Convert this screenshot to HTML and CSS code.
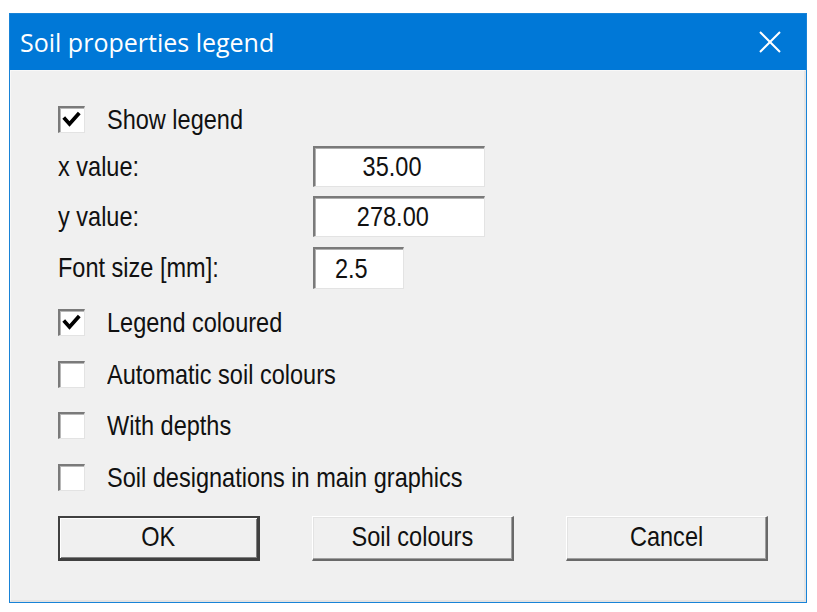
FILE: index.html
```html
<!DOCTYPE html>
<html>
<head>
<meta charset="utf-8">
<link rel="stylesheet" href="styles.css">
</head>
<body>
<div class="window">
  <div class="titlebar">
    <span class="title">Soil properties legend</span>
    <svg class="close" width="22" height="22" viewBox="0 0 22 22"><path d="M1 1 L21 21 M21 1 L1 21" stroke="#fff" stroke-width="2" fill="none"/></svg>
  </div>
  <div class="client">
    <div class="row check-row first">
      <span class="cb"><svg viewBox="0 0 22 22" width="22" height="22"><path d="M4 10 L8.5 15 L17 5.5" stroke="#000" stroke-width="3.8" fill="none" stroke-linejoin="miter" stroke-linecap="square"/></svg></span>
      <span class="t">Show legend</span>
    </div>
    <div class="row field-row r-x">
      <span class="label"><span class="t">x value:</span></span>
      <span class="input wide center"><span class="t c">35.00</span></span>
    </div>
    <div class="row field-row r-y">
      <span class="label"><span class="t">y value:</span></span>
      <span class="input wide center"><span class="t c">278.00</span></span>
    </div>
    <div class="row field-row r-f">
      <span class="label"><span class="t">Font size [mm]:</span></span>
      <span class="input narrow"><span class="t">2.5</span></span>
    </div>
    <div class="row check-row c1">
      <span class="cb"><svg viewBox="0 0 22 22" width="22" height="22"><path d="M4 10 L8.5 15 L17 5.5" stroke="#000" stroke-width="3.8" fill="none" stroke-linejoin="miter" stroke-linecap="square"/></svg></span>
      <span class="t">Legend coloured</span>
    </div>
    <div class="row check-row c2">
      <span class="cb"></span>
      <span class="t">Automatic soil colours</span>
    </div>
    <div class="row check-row c3">
      <span class="cb"></span>
      <span class="t">With depths</span>
    </div>
    <div class="row check-row c4">
      <span class="cb"></span>
      <span class="t">Soil designations in main graphics</span>
    </div>
    <div class="buttons">
      <span class="btn default"><span class="t c">OK</span></span>
      <span class="btn"><span class="t c">Soil colours</span></span>
      <span class="btn"><span class="t c">Cancel</span></span>
    </div>
  </div>
</div>
</body>
</html>
```

FILE: styles.css
```css
html, body {
  margin: 0;
  padding: 0;
  background: #ffffff;
}
body {
  padding: 13px 0 0 9px;
}
.window {
  width: 798px;
  height: 590px;
  box-sizing: border-box;
  border: 1px solid #1883d7;
  background: #0078d7;
  display: flex;
  flex-direction: column;
}
.titlebar {
  height: 56px;
  display: flex;
  align-items: center;
  justify-content: space-between;
  padding: 0 25px 0 10px;
  color: #fff;
}
.title {
  font-family: "Open Sans", "Noto Sans", sans-serif;
  font-size: 25px;
}
.close {
  display: block;
}
.client {
  flex: 1;
  background: #f0f0f0;
  border-top: 1px solid #f8f8f8;
  border-left: 1px solid #f8f8f8;
  border-right: 2px solid #e3e3e3;
  border-bottom: 2px solid #e3e3e3;
  padding: 35px 0 0 47px;
  font-family: "Liberation Sans", Arial, sans-serif;
  font-size: 28px;
  color: #111;
  display: flex;
  flex-direction: column;
}
.t {
  display: inline-block;
  white-space: nowrap;
  transform: scaleX(0.84);
  transform-origin: left center;
  line-height: 1;
}
.t.c {
  transform-origin: center center;
}
.row {
  display: flex;
  align-items: center;
}
.check-row {
  height: 27px;
}
.first { margin-top: 0; }
.r-x { margin-top: 13px; }
.r-y { margin-top: 9px; }
.r-f { margin-top: 10px; }
.c1 { margin-top: 20px; }
.c2 { margin-top: 25px; }
.c3 { margin-top: 24px; }
.c4 { margin-top: 25px; }
.cb {
  flex: none;
  width: 27px;
  height: 27px;
  box-sizing: border-box;
  background: #fff;
  border-top: 2px solid #7a7a7a;
  border-left: 2px solid #7a7a7a;
  border-right: 1px solid #e3e3e3;
  border-bottom: 1px solid #e3e3e3;
  box-shadow: inset 1px 1px 0 #b8b8b8;
  display: flex;
  align-items: center;
  justify-content: center;
  margin-right: 22px;
}
.cb svg { display: block; }
.field-row {
  height: 41px;
}
.r-f { height: 42px; }
.label {
  width: 255px;
}
.input {
  height: 100%;
  box-sizing: border-box;
  background: #fff;
  border-top: 2px solid #7a7a7a;
  border-left: 2px solid #7a7a7a;
  border-right: 1px solid #e3e3e3;
  border-bottom: 1px solid #e3e3e3;
  box-shadow: inset 1px 1px 0 #b0b0b0;
  display: flex;
  align-items: center;
}
.wide {
  width: 172px;
}
.center {
  justify-content: center;
  padding-right: 14px;
}
.narrow {
  width: 91px;
  padding-left: 20px;
}
.buttons {
  margin-top: 25px;
  display: flex;
  gap: 52px;
}
.btn {
  width: 202px;
  height: 45px;
  box-sizing: border-box;
  background: #f0f0f0;
  border-top: 1px solid #ffffff;
  border-left: 1px solid #ffffff;
  border-right: 2px solid #696969;
  border-bottom: 2px solid #696969;
  box-shadow: inset -1px -1px 0 #a0a0a0, inset 1px 1px 0 #e3e3e3;
  display: flex;
  align-items: center;
  justify-content: center;
  padding-bottom: 2px;
}
.btn.default {
  border: 2px solid #404040;
  border-right-width: 3px;
  border-bottom-width: 3px;
  box-shadow: inset 1px 1px 0 #ffffff, inset -1px -1px 0 #808080;
}
```
